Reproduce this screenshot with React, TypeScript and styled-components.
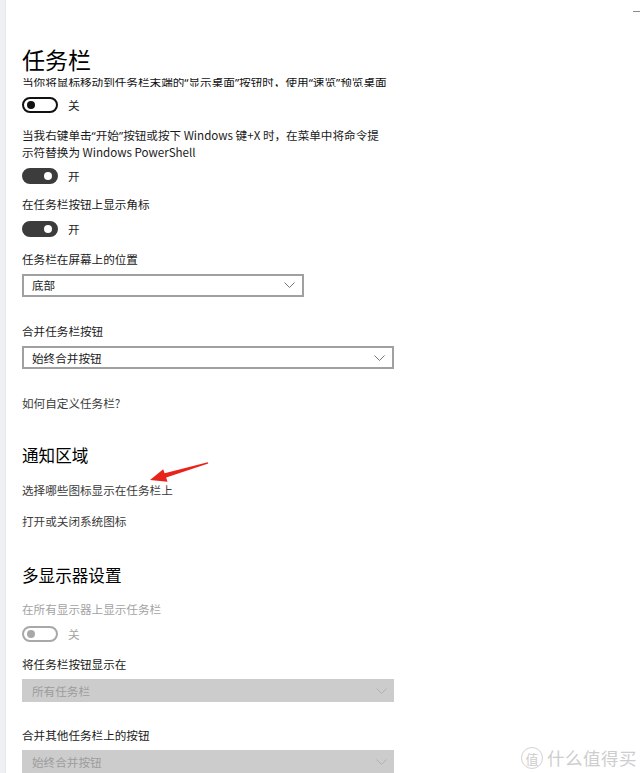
import React from "react";
import styled, { createGlobalStyle } from "styled-components";

const Global = createGlobalStyle`
  html, body { margin: 0; padding: 0; background: #fff; }
  body { overflow: hidden; font-family: "Noto Sans CJK SC", "Noto Sans", sans-serif; }
`;

const Page = styled.div`
  position: relative;
  display: flex;
  width: 640px;
  height: 773px;
  overflow: hidden;
  background: #fff;
`;

const Rail = styled.div`
  width: 5px;
  flex: none;
  background: #eef0f3;
  border-right: 1px solid #e6e8ec;
`;

const Content = styled.div`
  display: flex;
  flex-direction: column;
  align-items: flex-start;
  padding: 44px 0 0 16px;
  color: #000;
`;

const Title = styled.h1`
  margin: 0;
  font-size: 23px;
  line-height: 30px;
  font-weight: 400;
  color: #000;
`;

const Heading = styled.h2<{ $mt: number }>`
  margin: ${(p) => p.$mt}px 0 0;
  font-size: 16.6px;
  line-height: 24px;
  font-weight: 400;
  color: #000;
`;

const Clip = styled.div`
  margin-top: 4px;
  height: 10px;
  overflow: hidden;
`;

const ClipText = styled.div`
  margin-top: -4px;
  font-size: 11.6px;
  line-height: 16px;
  color: #111;
  white-space: nowrap;
`;

const Q = styled.span`
  font-family: "Noto Sans", "Liberation Sans", sans-serif;
`;

const Label = styled.div<{ $mt: number; $dim?: boolean }>`
  margin-top: ${(p) => p.$mt}px;
  font-size: 11.6px;
  line-height: 16px;
  color: ${(p) => (p.$dim ? "#a3a3a3" : "#1a1a1a")};
  white-space: nowrap;
`;

const Link = styled(Label)`
  color: #3a3a3a;
`;

const ToggleRow = styled.div<{ $mt: number }>`
  margin-top: ${(p) => p.$mt}px;
  display: flex;
  align-items: center;
  gap: 10px;
  height: 16px;
`;

const Track = styled.span<{ $on?: boolean; $dim?: boolean }>`
  position: relative;
  box-sizing: border-box;
  width: 36px;
  height: 16px;
  border-radius: 8px;
  border: 2px solid ${(p) => (p.$dim ? "#a8a8a8" : p.$on ? "#3c3c3c" : "#111")};
  background: ${(p) => (p.$on ? "#3c3c3c" : "transparent")};
`;

const Knob = styled.span<{ $on?: boolean; $dim?: boolean }>`
  position: absolute;
  top: 50%;
  width: 8px;
  height: 8px;
  margin-top: -4px;
  border-radius: 50%;
  left: ${(p) => (p.$on ? "20px" : "3px")};
  background: ${(p) => (p.$on ? "#fff" : p.$dim ? "#a8a8a8" : "#111")};
`;

const ToggleText = styled.span<{ $dim?: boolean }>`
  font-size: 11.6px;
  line-height: 16px;
  color: ${(p) => (p.$dim ? "#a3a3a3" : "#1a1a1a")};
`;

const Select = styled.div<{ $mt: number; $w: number; $dim?: boolean }>`
  margin-top: ${(p) => p.$mt}px;
  box-sizing: border-box;
  width: ${(p) => p.$w}px;
  height: 26px;
  display: flex;
  align-items: center;
  justify-content: space-between;
  padding: 0 7px 0 ${(p) => (p.$dim ? 10 : 8)}px;
  border: ${(p) => (p.$dim ? "none" : "2px solid #a0a0a0")};
  background: ${(p) => (p.$dim ? "#cccccc" : "#fff")};
  font-size: 11.6px;
  color: ${(p) => (p.$dim ? "#9c9c9c" : "#1a1a1a")};
`;

const Chevron = styled.svg<{ $dim?: boolean }>`
  width: 11px;
  height: 6px;
  stroke: ${(p) => (p.$dim ? "#b0b0b0" : "#777")};
  fill: none;
  stroke-width: 1;
`;

const Arrow = styled.svg`
  position: absolute;
  left: 145px;
  top: 455px;
  width: 70px;
  height: 32px;
`;

const Minimize = styled.span`
  position: absolute;
  right: 0;
  top: 11px;
  width: 7px;
  height: 1px;
  background: #8a8a8a;
`;

const Watermark = styled.div`
  position: absolute;
  left: 521px;
  top: 747px;
  display: flex;
  align-items: center;
  gap: 4px;
  color: #cdcdcd;
`;

const Badge = styled.span`
  box-sizing: border-box;
  width: 22px;
  height: 22px;
  border-radius: 50%;
  border: 1.5px solid #d2d2d2;
  display: flex;
  align-items: center;
  justify-content: center;
  font-size: 13px;
  line-height: 1;
`;

const WmText = styled.span`
  font-size: 17.5px;
  line-height: 22px;
  letter-spacing: 0.5px;
`;

function Toggle({ on, dim, text, mt }: { on?: boolean; dim?: boolean; text: string; mt: number }) {
  return (
    <ToggleRow $mt={mt}>
      <Track $on={on} $dim={dim}>
        <Knob $on={on} $dim={dim} />
      </Track>
      <ToggleText $dim={dim}>{text}</ToggleText>
    </ToggleRow>
  );
}

function Dropdown({ value, w, mt, dim }: { value: string; w: number; mt: number; dim?: boolean }) {
  return (
    <Select $w={w} $mt={mt} $dim={dim}>
      <span>{value}</span>
      <Chevron $dim={dim} viewBox="0 0 11 6">
        <polyline points="0.5,0.5 5.5,5.5 10.5,0.5" />
      </Chevron>
    </Select>
  );
}

export default function App() {
  return (
    <>
      <Global />
      <Page>
        <Rail />
        <Content>
          <Title>任务栏</Title>
          <Clip>
            <ClipText>
              当你将鼠标移动到任务栏末端的<Q>“</Q>显示桌面<Q>”</Q>按钮时，使用<Q>“</Q>速览<Q>”</Q>预览桌面
            </ClipText>
          </Clip>
          <Toggle mt={10} text="关" />
          <Label $mt={14}>
            当我右键单击<Q>“</Q>开始<Q>”</Q>按钮或按下 Windows 键+X 时，在菜单中将命令提
            <br />
            示符替换为 Windows PowerShell
          </Label>
          <Toggle mt={8} on text="开" />
          <Label $mt={12}>在任务栏按钮上显示角标</Label>
          <Toggle mt={9} on text="开" />
          <Label $mt={14}>任务栏在屏幕上的位置</Label>
          <Dropdown mt={7} w={282} value="底部" />
          <Label $mt={26}>合并任务栏按钮</Label>
          <Dropdown mt={7} w={372} value="始终合并按钮" />
          <Link $mt={26}>如何自定义任务栏?</Link>
          <Heading $mt={32}>通知区域</Heading>
          <Link $mt={15}>选择哪些图标显示在任务栏上</Link>
          <Link $mt={15}>打开或关闭系统图标</Link>
          <Heading $mt={34}>多显示器设置</Heading>
          <Label $mt={14} $dim>在所有显示器上显示任务栏</Label>
          <Toggle mt={9} dim text="关" />
          <Label $mt={14}>将任务栏按钮显示在</Label>
          <Dropdown mt={7} w={372} dim value="所有任务栏" />
          <Label $mt={25}>合并其他任务栏上的按钮</Label>
          <Dropdown mt={7} w={372} dim value="始终合并按钮" />
        </Content>
        <Arrow viewBox="145 455 70 32">
          <polygon
            points="150,480 167.5,481.8 166.2,477.6 208.3,463.6 207.7,462.2 164.6,473.2 163.2,469.2"
            fill="#e8231c"
          />
        </Arrow>
        <Minimize />
        <Watermark>
          <Badge>值</Badge>
          <WmText>什么值得买</WmText>
        </Watermark>
      </Page>
    </>
  );
}
